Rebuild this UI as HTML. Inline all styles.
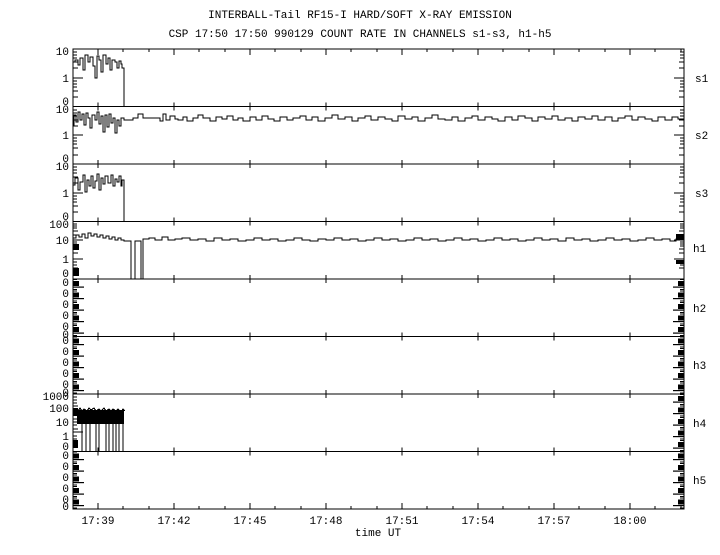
<!DOCTYPE html>
<html><head><meta charset="utf-8"><style>
body{margin:0;background:#fff;width:720px;height:550px;overflow:hidden}
svg text{font-family:"Liberation Mono",monospace;font-size:11px;fill:#000}
</style></head><body>
<svg width="720" height="550" xmlns="http://www.w3.org/2000/svg">
<defs>
<pattern id="pl" x="73" y="279" width="12" height="11.5" patternUnits="userSpaceOnUse">
<rect x="0" y="2" width="6" height="5" fill="#000"/><rect x="0" y="7.5" width="11" height="1.2" fill="#000"/><rect x="0" y="0" width="4" height="1" fill="#000"/><rect x="0" y="10" width="4" height="1" fill="#000"/>
</pattern>
<pattern id="pr" x="672" y="279" width="12" height="11.5" patternUnits="userSpaceOnUse">
<rect x="6" y="2" width="6" height="5" fill="#000"/><rect x="1" y="7.5" width="11" height="1.2" fill="#000"/><rect x="8" y="0" width="4" height="1" fill="#000"/><rect x="8" y="10" width="4" height="1" fill="#000"/>
</pattern>
</defs>
<text x="360" y="18" text-anchor="middle">INTERBALL-Tail RF15-I HARD/SOFT X-RAY EMISSION</text>
<text x="360" y="37" text-anchor="middle">CSP 17:50 17:50 990129  COUNT RATE IN CHANNELS s1-s3, h1-h5</text>
<rect x="73" y="279" width="12" height="115" fill="url(#pl)"/>
<rect x="73" y="451.5" width="12" height="57.5" fill="url(#pl)"/>
<rect x="672" y="279" width="12" height="230" fill="url(#pr)"/>
<g stroke="#000" stroke-width="1.3" fill="none" shape-rendering="crispEdges">
<rect x="73" y="49" width="611" height="460"/>
<path d="M73,106.5H684M73,164H684M73,221.5H684M73,279H684M73,336.5H684M73,394H684M73,451.5H684"/>
</g>
<g stroke="#000" stroke-width="1" fill="none" shape-rendering="crispEdges">
<path d="M98,49v6M174,49v6M250,49v6M326,49v6M402,49v6M478,49v6M554,49v6M630,49v6M123,49v3M149,49v3M199,49v3M225,49v3M275,49v3M301,49v3M351,49v3M377,49v3M427,49v3M453,49v3M503,49v3M529,49v3M579,49v3M605,49v3M655,49v3M681,49v3"/>
<path d="M98,509v-6M174,509v-6M250,509v-6M326,509v-6M402,509v-6M478,509v-6M554,509v-6M630,509v-6M123,509v-3M149,509v-3M199,509v-3M225,509v-3M275,509v-3M301,509v-3M351,509v-3M377,509v-3M427,509v-3M453,509v-3M503,509v-3M529,509v-3M579,509v-3M605,509v-3M655,509v-3M681,509v-3"/>
<path d="M98,106.5v-4v8M174,106.5v-4v8M250,106.5v-4v8M326,106.5v-4v8M402,106.5v-4v8M478,106.5v-4v8M554,106.5v-4v8M630,106.5v-4v8M98,164v-4v8M174,164v-4v8M250,164v-4v8M326,164v-4v8M402,164v-4v8M478,164v-4v8M554,164v-4v8M630,164v-4v8M98,221.5v-4v8M174,221.5v-4v8M250,221.5v-4v8M326,221.5v-4v8M402,221.5v-4v8M478,221.5v-4v8M554,221.5v-4v8M630,221.5v-4v8M98,279v-4v8M174,279v-4v8M250,279v-4v8M326,279v-4v8M402,279v-4v8M478,279v-4v8M554,279v-4v8M630,279v-4v8M98,336.5v-4v8M174,336.5v-4v8M250,336.5v-4v8M326,336.5v-4v8M402,336.5v-4v8M478,336.5v-4v8M554,336.5v-4v8M630,336.5v-4v8M98,394v-4v8M174,394v-4v8M250,394v-4v8M326,394v-4v8M402,394v-4v8M478,394v-4v8M554,394v-4v8M630,394v-4v8M98,451.5v-4v8M174,451.5v-4v8M250,451.5v-4v8M326,451.5v-4v8M402,451.5v-4v8M478,451.5v-4v8M554,451.5v-4v8M630,451.5v-4v8"/>
<path d="M73,52h4M73,55h4M73,58h4M73,62h5M73,68h5M73,78h10M73,81h4M73,84h4M73,87h4M73,91h5M73,97h5M684,52h-4M684,55h-4M684,58h-4M684,62h-5M684,68h-5M684,78h-10M684,81h-4M684,84h-4M684,87h-4M684,91h-5M684,97h-5"/>
<path d="M73,110h4M73,113h4M73,116h4M73,120h5M73,126h5M73,135h10M73,138h4M73,141h4M73,144h4M73,148h5M73,155h5M684,110h-4M684,113h-4M684,116h-4M684,120h-5M684,126h-5M684,135h-10M684,138h-4M684,141h-4M684,144h-4M684,148h-5M684,155h-5"/>
<path d="M73,167h4M73,170h4M73,173h4M73,177h5M73,183h5M73,193h10M73,196h4M73,199h4M73,202h4M73,206h5M73,212h5M684,167h-4M684,170h-4M684,173h-4M684,177h-5M684,183h-5M684,193h-10M684,196h-4M684,199h-4M684,202h-4M684,206h-5M684,212h-5"/>
<path d="M73,224h4M73,226h4M73,228h4M73,231h5M73,235h5M73,240h10M73,242h4M73,244h4M73,246h4M73,249h5M73,253h5M73,259h10M73,262h4M73,265h4M73,268h5M684,224h-4M684,226h-4M684,228h-4M684,231h-5M684,235h-5M684,240h-10M684,242h-4M684,244h-4M684,246h-4M684,249h-5M684,253h-5M684,259h-10M684,262h-4M684,265h-4M684,268h-5"/>
<path d="M73,397h4M73,400h4M73,403h4M73,406h5M73,419h5M73,422h4M73,425h4M73,429h5M73,432h10M73,436h4M73,439h4M73,443h5M73,446h4"/>
</g>
<g fill="#000" shape-rendering="crispEdges">
<rect x="73" y="244" width="6" height="6"/><rect x="73" y="268" width="6" height="8"/>
<rect x="676" y="234" width="8" height="5"/><rect x="676" y="260" width="8" height="4"/>
<rect x="73" y="408" width="5" height="8"/><rect x="73" y="440" width="5" height="8"/>
<rect x="77" y="410" width="47" height="14"/>
</g>
<g stroke="#000" stroke-width="1" fill="none" shape-rendering="crispEdges">
<path d="M82,424V451M86,424V451M90,424V451M96,424V451M99,424V451M106,424V451M109,424V451M113,424V451M116,424V451M119,424V451M123,424V451"/>
<path d="M76,409l2,2l2,-3l2,3l2,-2l3,2l2,-3l2,2l3,-2l2,3l3,-2l2,2l3,-3l2,3l3,-2l2,2l2,-2l3,2l2,-2l3,3l2,-3l2,2"/>
</g>
<g stroke="#000" stroke-width="1.3" fill="none" shape-rendering="crispEdges">
<path d="M73,62H75V60H78V65H80V58H83V70H85V55H88V62H90V57H93V66H95V78H97V56H99V60H101V72H103V55H106V64H108V58H110V70H112V60H115V62H117V68H119V61H121V64H122V68H124V106.5"/>
<path d="M73,125H74V115H76V122H78V112H80V120H82V114H84V125H86V113H88V118H90V128H92V115H95V120H97V112H99V124H101V116H103V132H105V115H107V127H109V114H111V123H113V118H115V133H117V120H119V126H121V118H124V120H133V118H138V114H143V118H160V121H163V114H166V120H170V116H175V119H178V120H183V117H187V121H193V118H198V115H203V118H210V121H216V117H222V119H227V116H233V120H238V118H243V121H250V117H256V120H262V116H268V119H274V121H280V117H287V120H293V118H300V116H306V120H312V117H318V121H325V118H332V115H338V119H345V117H352V121H358V118H365V116H371V120H378V117H385V119H392V121H398V116H405V119H412V117H418V121H425V118H432V115H438V119H445V120H452V117H458V121H465V118H472V116H478V120H485V117H492V119H498V121H505V117H512V120H518V116H525V118H532V121H538V117H545V119H552V116H558V120H565V118H572V121H578V117H585V119H592V116H598V120H605V117H612V121H618V118H625V116H632V120H638V117H645V119H652V121H658V117H665V120H672V117H678V119H684"/>
<path d="M73,185H75V178H78V190H80V182H83V175H85V192H87V180H89V186H91V176H93V188H95V181H97V174H99V190H101V178H103V184H105V176H108V183H111V175H113V186H115V179H117V182H119V176H121V186H122V180H124V221.5"/>
<path d="M73,238H76V235H79V237H82V234H85V238H88V233H91V236H94V234H97V237H100V235H103V238H106V236H109V239H112V237H115V240H118V238H121V240H124V241H131V279H135V241H141V279H143V239H149V238H155V240H162V237H168V240H175V239H182V238H190V240H198V239H206V241H214V238H222V240H230V239H238V241H246V240H254V238H262V240H270V239H278V241H286V240H294V238H302V240H310V241H318V239H326V240H334V238H342V240H350V239H358V241H366V240H374V238H382V240H390V239H398V241H406V240H414V238H422V240H430V239H438V241H446V240H454V238H462V240H470V239H478V241H486V240H494V238H502V240H510V239H518V241H526V240H534V238H542V240H550V239H558V241H566V238H574V240H582V239H590V241H598V240H606V238H614V240H622V239H630V241H638V240H646V238H654V240H662V239H670V241H676V239H684"/>
</g>
<g text-anchor="end">
<text x="69" y="55">10</text><text x="69" y="82">1</text><text x="69" y="105">0</text>
<text x="69" y="113">10</text><text x="69" y="139">1</text><text x="69" y="162">0</text>
<text x="69" y="170">10</text><text x="69" y="197">1</text><text x="69" y="220">0</text>
<text x="69" y="228">100</text><text x="69" y="244">10</text><text x="69" y="263">1</text><text x="69" y="277">0</text>
<text x="69" y="286">0</text><text x="69" y="297">0</text><text x="69" y="308">0</text><text x="69" y="319">0</text><text x="69" y="330">0</text><text x="69" y="338">0</text>
<text x="69" y="344">0</text><text x="69" y="355">0</text><text x="69" y="366">0</text><text x="69" y="377">0</text><text x="69" y="388">0</text><text x="69" y="396">0</text>
<text x="69" y="400">1000</text><text x="69" y="412">100</text><text x="69" y="426">10</text><text x="69" y="440">1</text><text x="69" y="450">0</text>
<text x="69" y="459">0</text><text x="69" y="470">0</text><text x="69" y="481">0</text><text x="69" y="492">0</text><text x="69" y="503">0</text><text x="69" y="510">0</text>
</g>
<text x="695" y="82">s1</text><text x="695" y="139">s2</text><text x="695" y="197">s3</text><text x="693" y="252">h1</text>
<text x="693" y="312">h2</text><text x="693" y="369">h3</text><text x="693" y="427">h4</text><text x="693" y="484">h5</text>
<g text-anchor="middle">
<text x="98" y="524">17:39</text><text x="174" y="524">17:42</text><text x="250" y="524">17:45</text><text x="326" y="524">17:48</text>
<text x="402" y="524">17:51</text><text x="478" y="524">17:54</text><text x="554" y="524">17:57</text><text x="630" y="524">18:00</text>
<text x="378" y="536">time UT</text>
</g>
</svg>
</body></html>
